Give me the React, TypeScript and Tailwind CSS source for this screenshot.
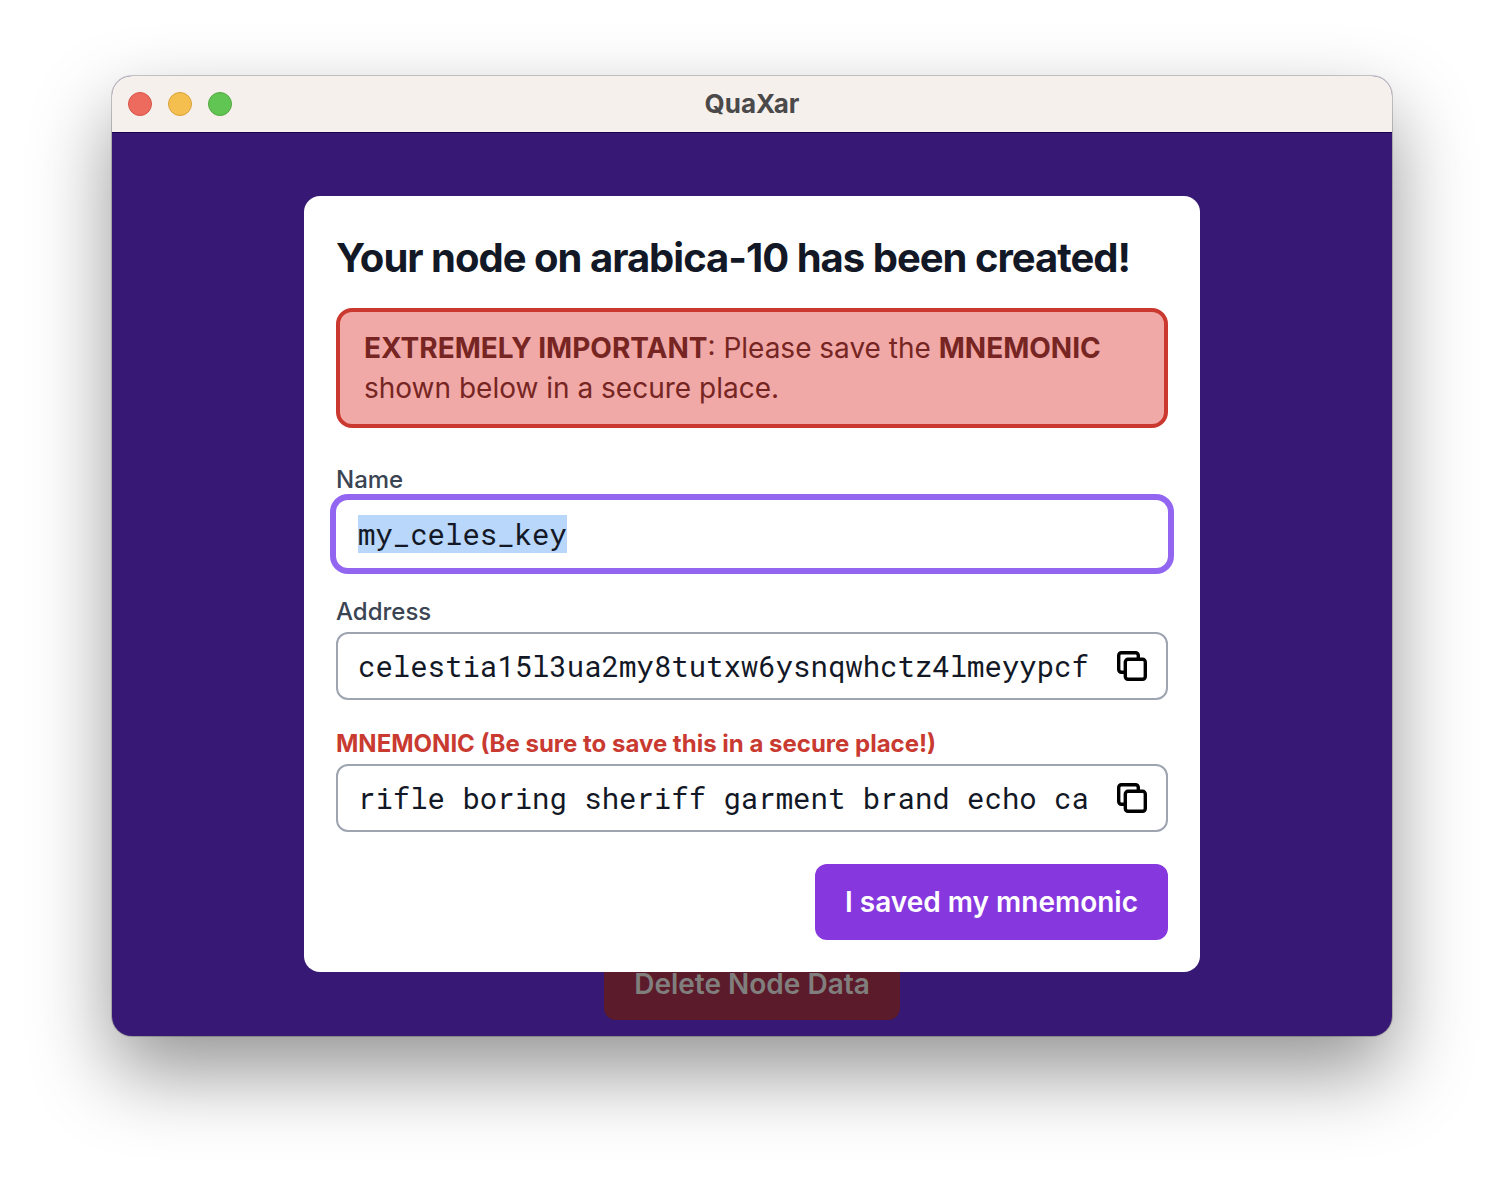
import { useEffect, useRef } from "react";

function CopyIcon() {
  return (
    <svg viewBox="0 0 32 32" className="size-8" fill="none" stroke="#000" strokeWidth="3.4" strokeLinejoin="round" aria-hidden="true">
      <rect x="9.3" y="9.3" width="20" height="20" rx="2.700" />
      <path d="M9.300 22.300H5.400a2.700 2.700 0 0 1-2.700-2.700V5.400a2.700 2.700 0 0 1 2.700-2.700h14.200a2.700 2.700 0 0 1 2.700 2.700V9.300" />
    </svg>
  );
}

type CopyFieldProps = { id: string; label: string; value: string; danger?: boolean };

function CopyField({ id, label, value, danger }: CopyFieldProps) {
  return (
    <div>
      <label
        htmlFor={id}
        className={danger ? "block text-[24px] leading-10 font-bold text-[#c93a31]" : "block text-[24px] leading-10 font-medium text-[#3a4453]"}
      >
        {label}
      </label>
      <div className="flex h-[68px] items-center gap-6 rounded-xl border-2 border-[#9ea4b0] bg-white pr-[18px] pl-5">
        <input
          id={id}
          readOnly
          defaultValue={value}
          className="min-w-0 flex-1 bg-transparent font-['Roboto_Mono','Liberation_Mono',monospace] text-[29px] leading-10 text-[#131826] outline-none"
        />
        <button type="button" aria-label={"Copy " + label}>
          <CopyIcon />
        </button>
      </div>
    </div>
  );
}

export default function App() {
  const nameRef = useRef<HTMLInputElement>(null);
  useEffect(() => {
    nameRef.current?.focus();
    nameRef.current?.select();
  }, []);

  return (
    <div className="min-h-screen bg-white px-28 pt-[76px] pb-[148px] font-['Inter',sans-serif]">
      <div className="relative flex flex-col overflow-hidden rounded-[20px] bg-[#371875] shadow-[0_0_0_1px_rgba(0,0,0,0.2),0_36px_80px_rgba(0,0,0,0.42)]">
        <header className="grid h-14 grid-cols-3 items-center bg-[#f6f0ed] px-4">
          <div className="flex gap-4">
            <button type="button" aria-label="Close" className="size-6 rounded-full border border-[#d55549] bg-[#ed6a5e]" />
            <button type="button" aria-label="Minimize" className="size-6 rounded-full border border-[#d8a13b] bg-[#f5bf4f]" />
            <button type="button" aria-label="Zoom" className="size-6 rounded-full border border-[#52a73e] bg-[#61c554]" />
          </div>
          <h1 className="text-center text-[26px] leading-8 font-bold text-[#4b4949]">QuaXar</h1>
        </header>
        <div className="border-t border-[#17004f] px-48 pt-[63px]">
          <section role="dialog" aria-labelledby="title" className="relative rounded-2xl bg-white p-8">
            <h2 id="title" className="text-[40px] leading-[60px] font-bold tracking-tight text-[#131826]">
              Your node on arabica-10 has been created!
            </h2>
            <p className="mt-5 rounded-2xl border-4 border-[#cb382f] bg-[#f0a9a7] px-6 py-4 text-[28px] leading-10 text-[#762522]">
              <strong>EXTREMELY IMPORTANT</strong>: Please save the <strong>MNEMONIC</strong> shown below in a secure place.
            </p>
            <div className="mt-8 flex flex-col gap-6">
              <div>
                <label htmlFor="name" className="block text-[24px] leading-10 font-medium text-[#3a4453]">
                  Name
                </label>
                <input
                  id="name"
                  ref={nameRef}
                  readOnly
                  defaultValue="my_celes_key"
                  className="block h-[68px] w-full rounded-xl bg-white px-[22px] font-['Roboto_Mono','Liberation_Mono',monospace] text-[29px] leading-10 text-[#131826] ring-6 ring-[#9366f2] outline-none selection:bg-[#b9d6fb] selection:text-[#131826]"
                />
              </div>
              <CopyField id="address" label="Address" value="celestia15l3ua2my8tutxw6ysnqwhctz4lmeyypcf" />
              <CopyField id="mnemonic" label="MNEMONIC (Be sure to save this in a secure place!)" value="rifle boring sheriff garment brand echo ca" danger />
            </div>
            <div className="mt-8 flex justify-end">
              <button type="button" className="h-19 rounded-xl bg-[#8638de] px-[30px] text-[28px] font-semibold text-white">
                I saved my mnemonic
              </button>
            </div>
          </section>
        </div>
        <div className="-mt-6 flex justify-center pb-4">
          <button type="button" className="h-18 rounded-xl bg-[#5c1b2a] px-[30px] text-[28px] font-semibold text-[#807f7e]">
            Delete Node Data
          </button>
        </div>
      </div>
    </div>
  );
}
